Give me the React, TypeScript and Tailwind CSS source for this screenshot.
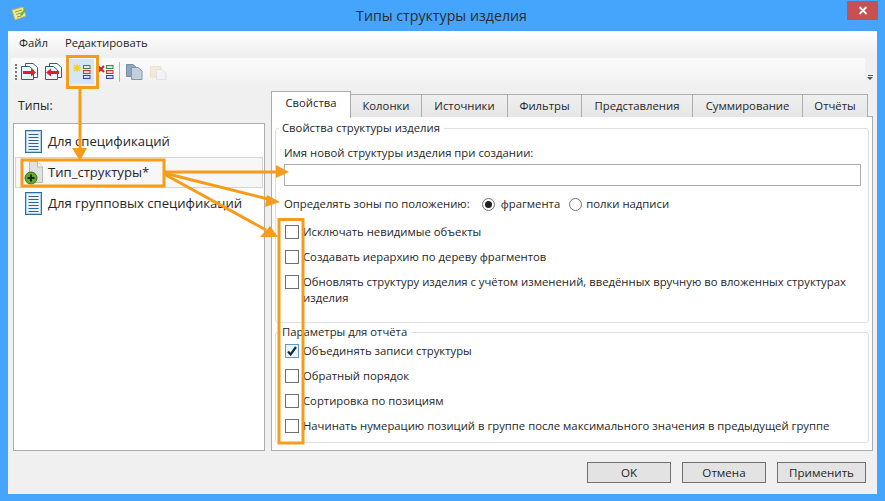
const FONT = "font-['Open_Sans','Noto_Sans',sans-serif]";

function DocBlue() {
  return (
    <svg width="17" height="23" viewBox="0 0 17 23" className="shrink-0">
      <rect x="0.5" y="0.5" width="16" height="22" fill="#eaf3fb" stroke="#2f6f9f" />
      <rect x="1.5" y="1.5" width="14" height="20" fill="none" stroke="#a9d3ee" />
      {[4, 7, 10, 13, 16, 19].map((y) => (
        <path key={y} d={`M3.5 ${y + 0.5}H13.5`} stroke="#3a5f88" />
      ))}
    </svg>
  );
}

function DocAdd() {
  return (
    <svg width="20" height="24" viewBox="0 0 20 24" className="shrink-0">
      <path d="M5.5 .5H13.5L18.5 6V21.5H5.5Z" fill="#dfe2dd" stroke="#b8bcb6" />
      <path d="M13.5 .5V6H18.5" fill="#fafafa" stroke="#b8bcb6" />
      <circle cx="7" cy="17" r="6" fill="#6aa62e" stroke="#3f6f1a" />
      <path d="M3.5 17H10.5M7 13.5V20.5" stroke="#10300a" strokeWidth="2" />
    </svg>
  );
}

function PageArrow({ flip }: { flip?: boolean }) {
  return (
    <svg width="17" height="17" viewBox="0 0 17 17" className="shrink-0">
      <path d="M4.5 .5H12L16.5 4.5V14.5H4.5Z" fill="#fff" stroke="#2b5f86" />
      <path d="M.5 3.5H8.5L12.5 7V16.5H.5Z" fill="#eef4f9" stroke="#2b5f86" />
      <path
        d={flip ? "M1 9.5L6 5.5V8H14V11H6V13.5Z" : "M15 9.5L10 5.5V8H2V11H10V13.5Z"}
        fill="#d8232a"
      />
    </svg>
  );
}

function Stack() {
  return (
    <svg width="8" height="14" viewBox="0 0 8 14" className="shrink-0">
      <rect x=".5" y=".5" width="6.5" height="3" fill="#d8f0d4" stroke="#2f8f3a" />
      <rect x=".5" y="5.5" width="6.5" height="3" fill="#f9d5d5" stroke="#d02f3a" />
      <rect x=".5" y="10.5" width="6.5" height="3" fill="#d9dcf7" stroke="#3440b0" />
    </svg>
  );
}

function Tab({ label, w, active }: { label: string; w: string; active?: boolean }) {
  return active ? (
    <div className={`${w} h-[27px] -mb-px relative z-10 bg-white border border-b-0 border-[#acacac] flex items-start justify-center pt-[3px] text-[11.3px] text-[#262626]`}>
      {label}
    </div>
  ) : (
    <div className={`${w} h-[23px] mt-[3px] border border-b-0 border-l-0 border-[#acacac] flex items-center justify-center text-[11.3px] text-[#262626] bg-linear-to-b from-[#f0f0f0] to-[#e5e5e5]`}>
      {label}
    </div>
  );
}

function Check({ label, checked, two }: { label: string; checked?: boolean; two?: boolean }) {
  return (
    <div className="flex items-start ml-px">
      <div className={`w-[14px] h-[14px] mt-px shrink-0 border flex items-center justify-center ${checked ? "border-[#5b9bd5] bg-[#eaf4fc]" : "border-[#707070] bg-white"}`}>
        {checked && (
          <svg width="12" height="12" viewBox="0 0 12 12">
            <path d="M2 6.5L4.6 9.5L10 2" fill="none" stroke="#1c2a38" strokeWidth="2.2" />
          </svg>
        )}
      </div>
      <span className={`ml-1 text-[11.3px] leading-[16px] text-[#262626] ${two ? "w-[548px]" : ""}`}>{label}</span>
    </div>
  );
}

function Btn({ label, w }: { label: string; w: string }) {
  return (
    <div className={`${w} h-[21px] border border-[#707070] bg-[#e3e3e3] flex items-center justify-center text-[11.6px] text-[#262626]`}>
      {label}
    </div>
  );
}

function ListRow({ icon, label, selected }: { icon: React.ReactNode; label: string; selected?: boolean }) {
  return (
    <div className={`h-[31px] flex items-center gap-[5px] pl-[8px] text-[13.1px] text-[#262626] border ${selected ? "border-[#d4d4d4] bg-[#f7f7f7]" : "border-transparent"}`}>
      <div className="w-[19px] flex justify-center">{icon}</div>
      <span>{label}</span>
    </div>
  );
}

export default function App() {
  const o = "#f59c1a";
  return (
    <div className={`relative w-[885px] h-[501px] overflow-hidden bg-[#45a5fd] flex flex-col ${FONT}`}>
      <div className="h-[31px] shrink-0 flex items-start relative">
        <svg width="16" height="15" viewBox="0 0 16 15" className="ml-[11px] mt-[6px]">
          <path d="M1 4L12 1L15 10L4 14Z" fill="#f2ec8a" stroke="#b8b070" />
          <path d="M4 6L11 4M5 8.5L12 6.5M6 11L10 10" stroke="#8a9a50" />
          <path d="M9 9L14 2L15.500 3L11 10Z" fill="#5db84a" />
        </svg>
        <div className="ml-[9px] flex-1 text-center text-[14.2px] leading-[32px] text-[#2b2b2b]">Типы структуры изделия</div>
        <div className="w-[31px] h-[19px] mt-px mr-[7px] bg-[#c75050] flex items-center justify-center">
          <svg width="10" height="9" viewBox="0 0 10 9">
            <path d="M1.500 1L8.500 8M8.500 1L1.500 8" stroke="#fff" strokeWidth="1.800" />
          </svg>
        </div>
      </div>

      <div className="mx-2 mb-2 flex-1 flex flex-col bg-[#f0f0f0]">
        <div className="h-[25px] shrink-0 flex items-center gap-[17px] pl-[11px] text-[11.3px] text-[#262626] bg-linear-to-b from-white to-[#efefef]">
          <span>Файл</span>
          <span>Редактировать</span>
        </div>
        <div className="h-[27px] mt-[2px] shrink-0 flex">
          <div className="ml-[3px] w-[854px] flex items-center bg-linear-to-b from-[#fbfbfb] via-[#f7f7f7] to-[#f0f0f0]">
            <div className="ml-[4px] w-[2px] h-[16px] border-l-2 border-dotted border-[#7a7a7a]" />
            <div className="ml-[4px]"><PageArrow /></div>
            <div className="ml-[7px]"><PageArrow flip /></div>
            <div className="ml-[5px] w-px h-[20px] bg-[#b8c4ce]" />
            <div className="ml-[2px] w-[24px] h-[25px] bg-[#d5e6f7] flex items-center justify-center gap-[2px]">
              <svg width="8" height="8" viewBox="0 0 8 8" className="-mt-[7px]">
                <path d="M4 0V8M0 4H8M1 1L7 7M7 1L1 7" stroke="#f5d020" strokeWidth="1.300" />
              </svg>
              <Stack />
            </div>
            <svg width="8" height="8" viewBox="0 0 8 8" className="ml-[3px] -mt-[6px]">
              <path d="M1 1L7 7M7 1L1 7" stroke="#d0202a" strokeWidth="2" />
            </svg>
            <div className="ml-px"><Stack /></div>
            <div className="ml-[5px] w-px h-[20px] bg-[#b8b8b8]" />
            <svg width="17" height="16" viewBox="0 0 17 16" className="ml-[6px]">
              <path d="M.5 .5H7L10 3V12.500H.5Z" fill="#8fa6bc" stroke="#7a90a6" />
              <path d="M5.500 3.500H12L16 7V15.500H5.500Z" fill="#c3d0dc" stroke="#8098ae" />
            </svg>
            <svg width="17" height="16" viewBox="0 0 17 16" className="ml-[7px] opacity-40">
              <path d="M.5 2.500H10.500V13H.5Z" fill="#efdcae" stroke="#d8c490" />
              <path d="M6.500 5.500H12L16 9V15.500H6.500Z" fill="#eef0f2" stroke="#c0c6cc" />
            </svg>
          </div>
          <div className="ml-[2px] flex flex-col items-center justify-end pb-[5px] gap-px">
            <div className="w-[5px] h-px bg-[#555]" />
            <div className="w-0 h-0 border-x-[3px] border-x-transparent border-t-[3px] border-t-[#555]" />
          </div>
        </div>

        <div className="flex-1 flex min-h-0 mt-[6px]">
          <div className="w-[263px] shrink-0 flex flex-col">
            <div className="h-[32px] pl-[10px] pt-[5px] text-[12.2px] leading-[20px] text-[#262626]">Типы:</div>
            <div className="ml-[5px] w-[252px] h-[328px] bg-white border border-[#acacac] pt-[2px] pl-px pr-px">
              <ListRow icon={<DocBlue />} label="Для спецификаций" />
              <ListRow icon={<DocAdd />} label="Тип_структуры*" selected />
              <ListRow icon={<DocBlue />} label="Для групповых спецификаций" />
            </div>
          </div>

          <div className="w-[602px] flex flex-col">
            <div className="h-[25px] shrink-0 flex items-start relative">
              <Tab label="Свойства" w="w-[80px]" active />
              <Tab label="Колонки" w="w-[71px]" />
              <Tab label="Источники" w="w-[86px]" />
              <Tab label="Фильтры" w="w-[74px]" />
              <Tab label="Представления" w="w-[111px]" />
              <Tab label="Суммирование" w="w-[110px]" />
              <Tab label="Отчёты" w="w-[65px]" />
            </div>
            <div className="h-[335px] bg-white border border-[#acacac] px-[3px] pt-[4px] flex flex-col gap-[2px]">
              <fieldset className="h-[202px] border border-[#dcdfe3] rounded-[3px] pl-[8px] pr-[7px]">
                <legend className="text-[11.3px] leading-[14px] text-[#262626] -ml-[5px] px-[3px] pr-[4px]">Свойства структуры изделия</legend>
                <div className="mt-[10px] text-[11.3px] leading-[16px] text-[#262626]">Имя новой структуры изделия при создании:</div>
                <div className="mt-[3px] h-[22px] border border-[#ababab] bg-white" />
                <div className="mt-[10px] h-[16px] flex items-center text-[11.3px] text-[#262626]">
                  <span>Определять зоны по положению:</span>
                  <div className="ml-[12px] w-[13px] h-[13px] rounded-full border border-[#707070] flex items-center justify-center">
                    <div className="w-[7px] h-[7px] rounded-full bg-[#222]" />
                  </div>
                  <span className="ml-[6px]">фрагмента</span>
                  <div className="ml-[9px] w-[13px] h-[13px] rounded-full border border-[#707070]" />
                  <span className="ml-[4px]">полки надписи</span>
                </div>
                <div className="mt-[12px] flex flex-col gap-[9px]">
                  <Check label="Исключать невидимые объекты" />
                  <Check label="Создавать иерархию по дереву фрагментов" />
                  <Check two label="Обновлять структуру изделия с учётом изменений, введённых вручную во вложенных структурах изделия" />
                </div>
              </fieldset>
              <fieldset className="h-[118px] border border-[#dcdfe3] rounded-[3px] pl-[8px] pr-[7px]">
                <legend className="text-[11.3px] leading-[14px] text-[#262626] -ml-[5px] px-[3px] pr-[4px]">Параметры для отчёта</legend>
                <div className="mt-[4px] flex flex-col gap-[9px]">
                  <Check checked label="Объединять записи структуры" />
                  <Check label="Обратный порядок" />
                  <Check label="Сортировка по позициям" />
                  <Check label="Начинать нумерацию позиций в группе после максимального значения в предыдущей группе" />
                </div>
              </fieldset>
            </div>
          </div>
        </div>

        <div className="h-[43px] shrink-0 flex items-center justify-end gap-[11px] pr-[11px]">
          <Btn label="OK" w="w-[84px]" />
          <Btn label="Отмена" w="w-[84px]" />
          <Btn label="Применить" w="w-[89px]" />
        </div>
      </div>

      <svg width="885" height="501" className="absolute inset-0 pointer-events-none">
        <g fill="none" stroke={o} strokeWidth="3">
          <rect x="67.500" y="56.500" width="30" height="31" />
          <rect x="22" y="160" width="142" height="26" />
          <rect x="279" y="219.500" width="24" height="223.500" />
          <path d="M80 89V150" />
          <path d="M164 172H277" />
          <path d="M164 173L268 199" />
          <path d="M164 174L266 230" />
        </g>
        <g fill={o}>
          <path d="M72 148H87L80 161Z" />
          <path d="M276 165L289 172L276 178Z" />
          <path d="M267 195L280 202L265 207Z" />
          <path d="M270 226L278 237L260 237Z" />
        </g>
      </svg>
    </div>
  );
}
